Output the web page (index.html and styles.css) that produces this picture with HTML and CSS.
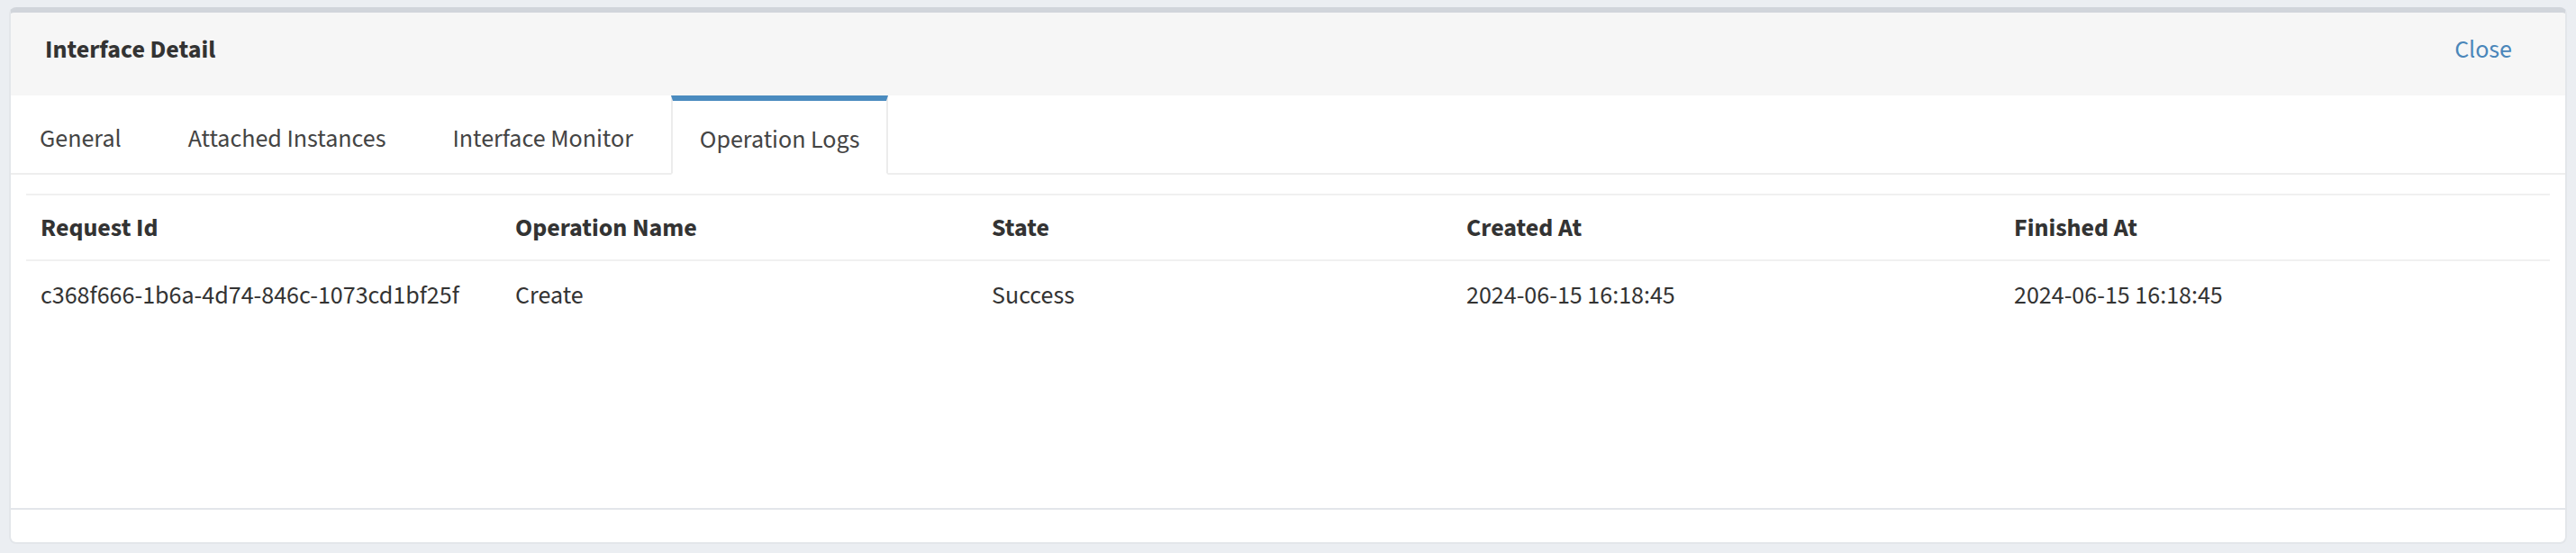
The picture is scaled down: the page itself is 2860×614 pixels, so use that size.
FILE: index.html
```html
<!DOCTYPE html>
<html lang="en">
<head>
<meta charset="utf-8">
<title>Interface Detail</title>
<link rel="stylesheet" href="styles.css">
</head>
<body>
<div class="panel">
  <div class="panel-header">
    <span class="panel-title">Interface Detail</span>
    <a class="panel-close" href="#">Close</a>
  </div>
  <ul class="tabs">
    <li class="tab">General</li>
    <li class="tab">Attached Instances</li>
    <li class="tab">Interface Monitor</li>
    <li class="tab tab-active">Operation Logs</li>
  </ul>
  <div class="tab-content">
    <table class="logs">
      <colgroup>
        <col class="col-id">
        <col class="col-op">
        <col class="col-state">
        <col class="col-created">
        <col class="col-finished">
      </colgroup>
      <thead>
        <tr>
          <th>Request Id</th>
          <th>Operation Name</th>
          <th>State</th>
          <th>Created At</th>
          <th>Finished At</th>
        </tr>
      </thead>
      <tbody>
        <tr>
          <td>c368f666-1b6a-4d74-846c-1073cd1bf25f</td>
          <td>Create</td>
          <td>Success</td>
          <td>2024-06-15 16:18:45</td>
          <td>2024-06-15 16:18:45</td>
        </tr>
      </tbody>
    </table>
  </div>
  <div class="panel-footer"></div>
</div>
</body>
</html>
```

FILE: styles.css
```css
html, body {
  background: #ebeef2;
}
body {
  margin: 8px 10px 10px;
  font-family: "Source Sans Pro", "Source Sans 3", Lato, "Open Sans", sans-serif;
  font-size: 28px;
  color: #333;
}
.panel {
  height: 596px;
  box-sizing: border-box;
  background: #fff;
  border: 2px solid #e3e6ea;
  border-top: 6px solid #d1d5db;
  border-radius: 8px;
  display: flex;
  flex-direction: column;
  overflow: hidden;
}
.panel-header {
  flex: 0 0 92px;
  box-sizing: border-box;
  background: #f6f6f6;
  display: flex;
  align-items: center;
  justify-content: space-between;
  padding: 0 59px 10px 38px;
}
.panel-title {
  font-weight: 700;
  color: #333;
}
.panel-close {
  color: #4a86ba;
  text-decoration: none;
}
.tabs {
  flex: 0 0 88px;
  box-sizing: border-box;
  margin: 0;
  padding: 0;
  list-style: none;
  display: flex;
  border-bottom: 2px solid #eeeeee;
}
.tab {
  display: flex;
  align-items: center;
  padding: 12px 30px 0;
  margin-right: 10px;
  color: #444;
  border: 2px solid transparent;
  border-top: 0;
}
.tab-active {
  background: #fff;
  border-color: #ececec;
  border-top: 6px solid #4a8bbf;
  border-bottom-color: #fff;
  margin-bottom: -2px;
  padding-top: 6px;
}
.tab-content {
  flex: 1;
  padding: 21px 17px 0;
  border-bottom: 2px solid #e3e6ea;
}
.logs {
  width: 100%;
  table-layout: fixed;
  border-collapse: collapse;
  border-top: 2px solid #f0f0f0;
}
.col-id { width: 527px; }
.col-op { width: 529px; }
.col-state { width: 527px; }
.col-created { width: 608px; }
.logs th, .logs td {
  text-align: left;
  padding: 0 16px;
  vertical-align: middle;
  white-space: nowrap;
}
.logs th {
  height: 71px;
  font-weight: 700;
  color: #333;
  border-bottom: 2px solid #f0f0f0;
}
.logs td {
  height: 76px;
  color: #333;
}
.panel-footer {
  flex: 0 0 36px;
}
```
